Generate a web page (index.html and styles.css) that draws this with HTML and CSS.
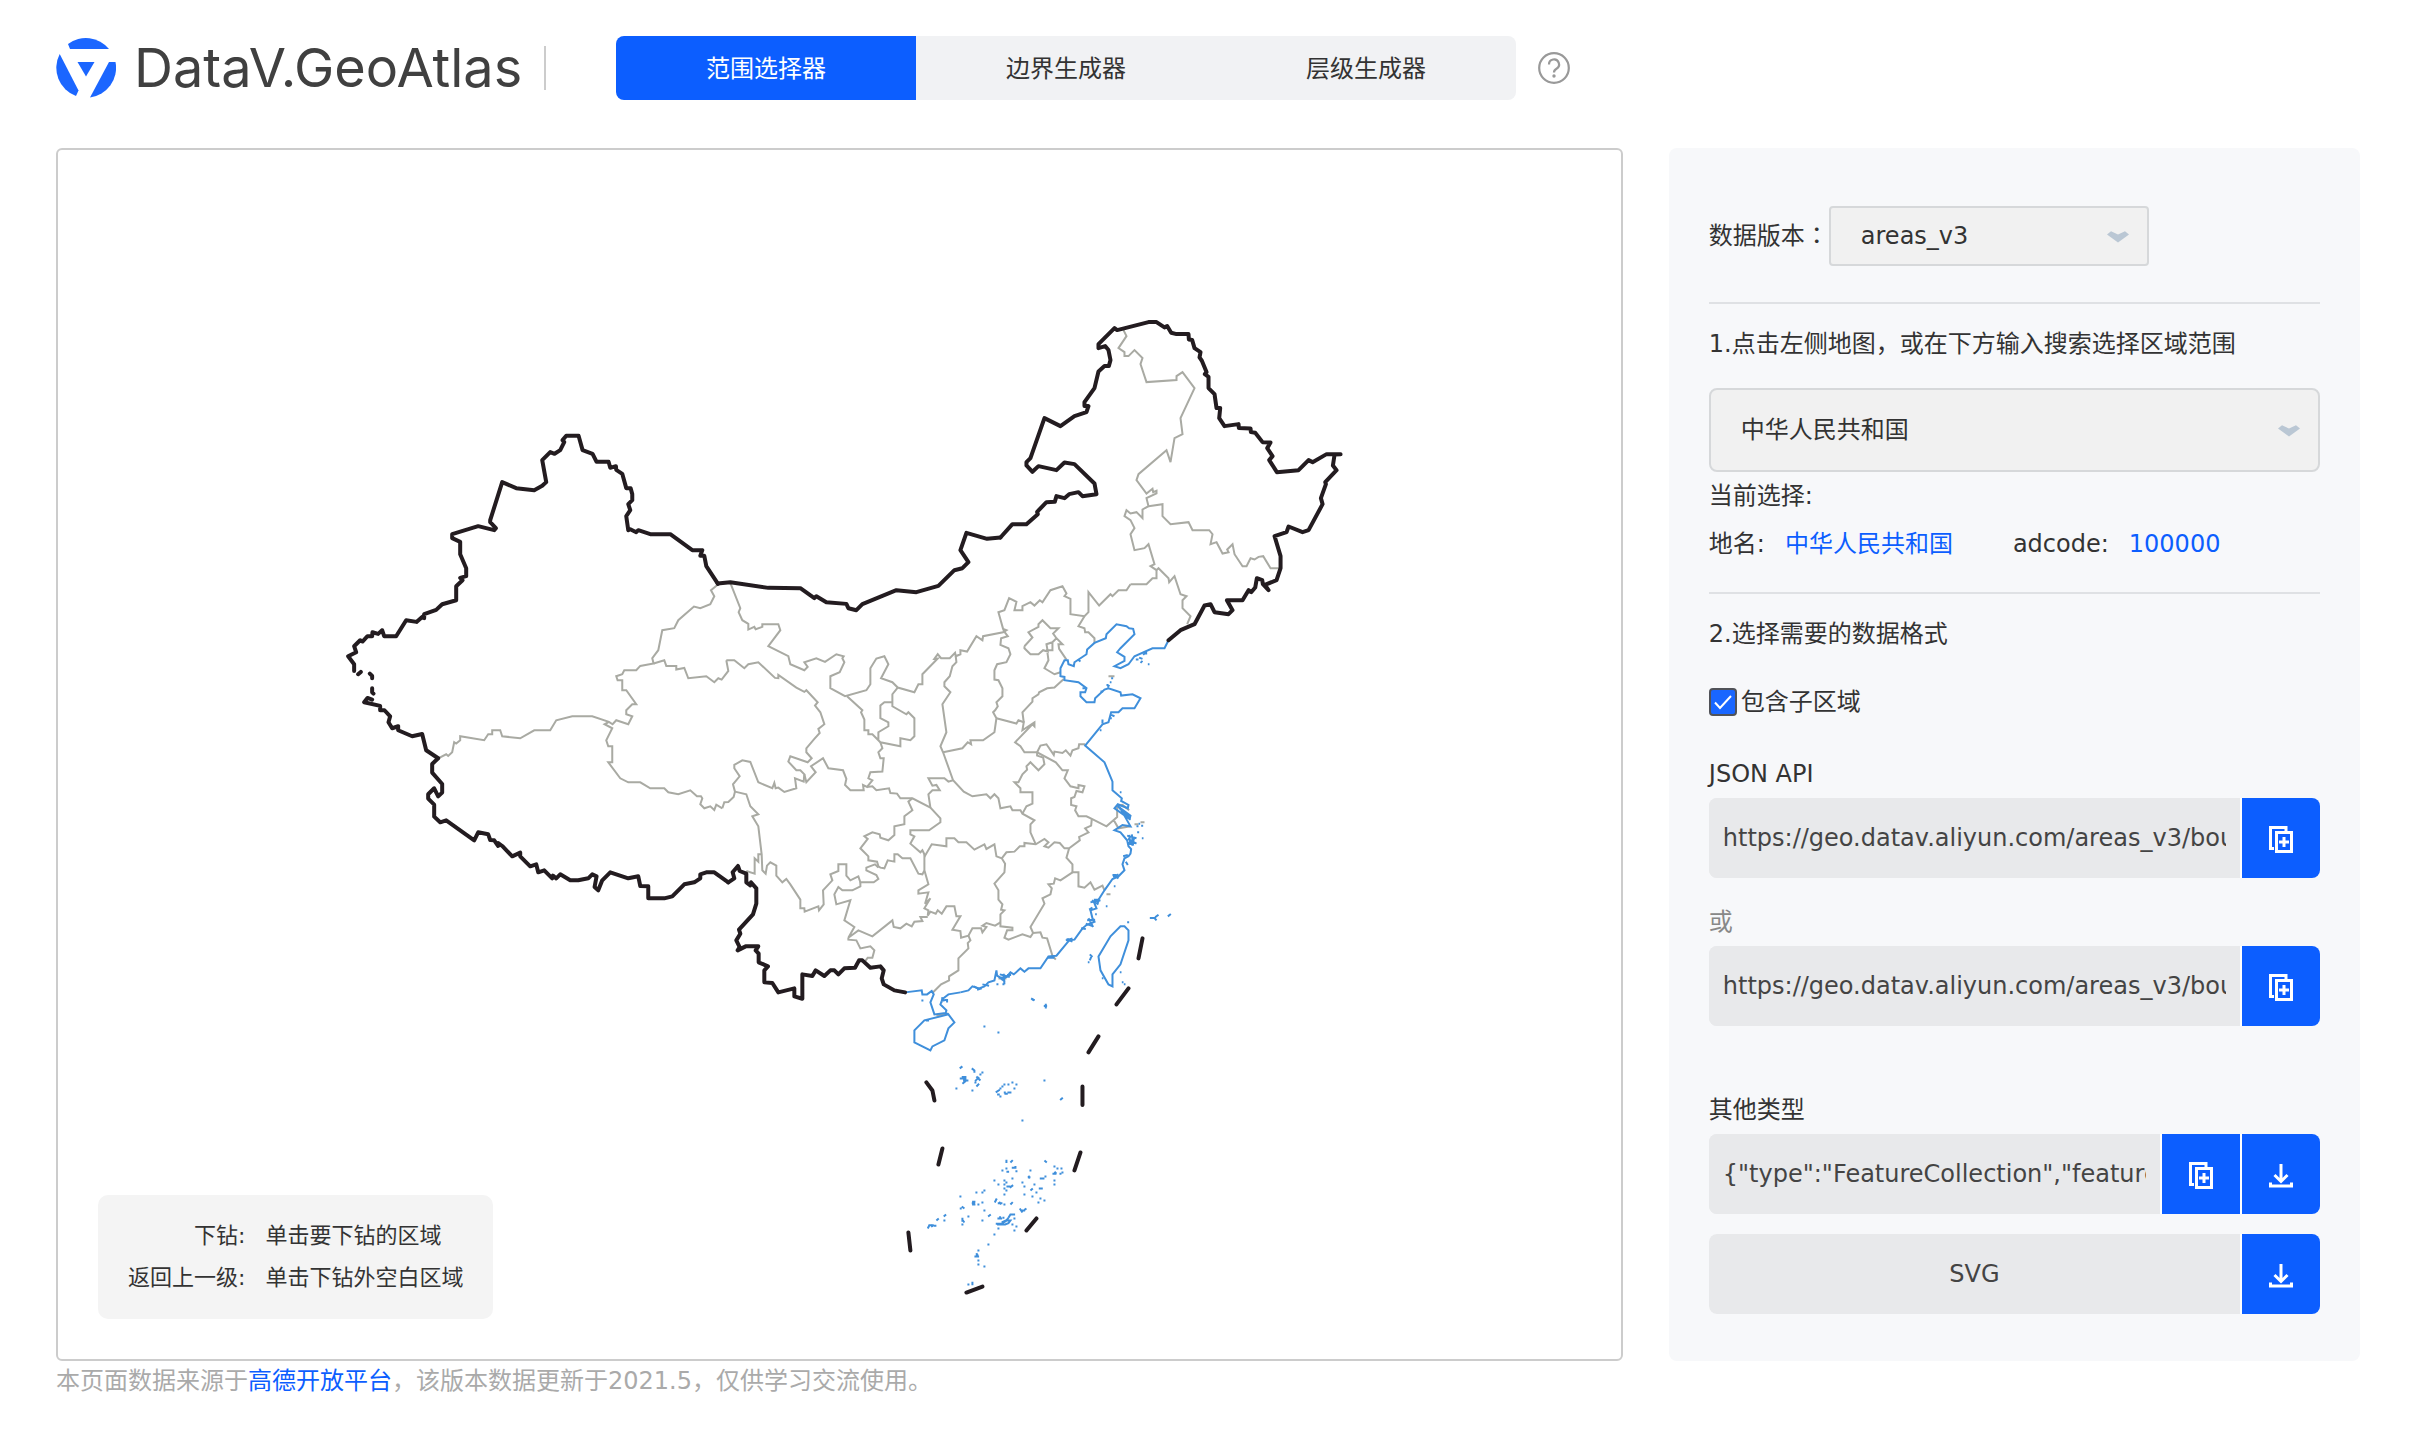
FILE: index.html
```html
<!DOCTYPE html>
<html lang="zh-CN">
<head>
<meta charset="utf-8">
<title>DataV.GeoAtlas</title>
<link rel="stylesheet" href="styles.css">
</head>
<body>
<svg class="symbols" aria-hidden="true">
  <symbol id="icon-arrow" viewBox="0 0 22 12"><path d="M0 3.5 4 .3 11 3.5 18 .3 22 3.5 11 11.500Z" fill="#bac7d4"/></symbol>
  <symbol id="icon-copy" viewBox="0 0 24 28"><path d="M5 22.500H1.500V1.500H17V5M7.500 6.500h15v19h-15ZM15 11v10M10 16h10" fill="none" stroke="#fff" stroke-width="3"/></symbol>
  <symbol id="icon-download" viewBox="0 0 24 24"><path d="M12 0v17M5.500 11 12 17.500 18.500 11M1.500 18.500V22h21v-3.500" fill="none" stroke="#fff" stroke-width="3"/></symbol>
</svg>

<header class="header">
  <a class="brand" href="#">
    <svg class="brand-mark" viewBox="0 0 60 60" aria-hidden="true">
      <g fill="#1b66ff">
        <path d="M12 6A30 30 0 0 1 53 11H14Z"/>
        <path d="M3.700 16A30 30 0 0 0 20 58L22.500 52.500Z"/>
        <path d="M53 24H59.500A30 30 0 0 1 34 59.500Z"/>
        <path d="M21.500 24H38.500L30 38.500Z"/>
      </g>
    </svg>
    <span class="brand-name">DataV.GeoAtlas</span>
  </a>
  <nav class="tabs">
    <button class="tab tab-active" type="button">范围选择器</button>
    <button class="tab" type="button">边界生成器</button>
    <button class="tab" type="button">层级生成器</button>
  </nav>
  <button class="help" type="button" aria-label="帮助">
    <svg viewBox="0 0 32 32" width="32" height="32" fill="none" stroke="#999" stroke-width="2.200"><circle cx="16" cy="16" r="14.800"/><path d="M11 12.500a5 5 0 1 1 7.500 4.200c-1.800 1-2.500 1.800-2.500 3.800"/><circle cx="16" cy="24" r="1.700" fill="#999" stroke="none"/></svg>
  </button>
</header>

<main class="main">
  <section class="map-panel" aria-label="地图">
    <svg class="map" viewBox="58 150 1562 1208" role="img" aria-label="中华人民共和国">
      <g class="province">
        <g transform="translate(330 400) scale(.33333)">
          <path d="M1163 553 1142 570 1152 588 1140 612 1110 624 1091 619 1044 660 1032 684 996 690 984 750 966 774 970 790 930 797 918 810 882 810 876 822 858 828 862 840 876 840 876 870 888 870 918 912 906 912 888 930 888 942 906 948 894 972 858 960 847 972 836 965 786 948 726 948 678 960 660 990 612 990 570 1014 516 1008 510 990 486 990 486 1002 474 1002 462 1020 390 1008 390 1020 378 1030 372 1026 366 1056 354 1067 348 1062 324 1074"/>
          <path d="M970 790 1002 780 1008 797 1038 797 1038 808 1062 803 1074 834 1128 828 1152 846 1164 834 1174 838 1194 812 1188 780"/>
          <path d="M836 965 823 972 846 984 828 1020 834 1038 846 1038 846 1086 834 1086 870 1134 894 1146 930 1146 960 1164 1002 1164 1014 1176 1044 1182 1080 1170 1100 1188 1112 1188 1116 1194 1110 1212 1122 1224 1140 1218 1152 1229 1158 1213 1176 1224"/>
        </g>
        <g transform="translate(700 550) scale(.33333)">
          <path d="M78 330 102 330 132 354 144 342 174 336 224 383 234 384 234 374 288 412 312 425 318 420 352 456 344 466 360 486 372 522 354 536 358 548 342 566 318 594 318 606 334 624 322 636 270 618 264 634 288 660 300 660 312 672 310 694 284 684 288 714 252 725 234 712 226 714 222 698 216 714 174 696 150 635 126 630 102 644 102 654 118 678 98 702 104 724 100 740 84 755 72 756 66 774"/>
          <path d="M104 724 138 732 150 768 174 792 156 798 174 828 184 912 174 912 174 934 163 924 163 970 138 962M184 912 186 960 196 970 200 946 210 936 228 946 228 976 246 996 258 986 270 1002 300 1048 300 1074 312 1074 313 1084 354 1068 356 1080 370 1062 368 1020 396 990 390 972 414 962 414 942 438 942 438 976 450 990 474 978 480 996 520 996 534 986 528 974 498 960 498 952 524 942 534 952"/>
          <path d="M90 98 120 174 115 186 126 210 144 221 144 238 162 230 166 237 186 230 186 222 234 222 240 240 204 288 264 318 270 342 312 360 322 350 312 336 348 324 374 335 408 312 430 318 426 324 432 336 418 366 390 378 390 414 434 438 498 420 510 402 510 354 528 325 552 318 564 342 542 384 576 396 592 412 642 426 654 402 666 402 666 372 712 325 702 326 712 312 722 324 748 324 764 308 766 318 780 312 780 300 800 304 828 258 846 270 848 258 908 246 918 240 908 236 894 186 912 180 926 144 948 155 942 180 966 180 966 168 990 156 1002 166 1018 150 1026 156 1050 120 1086 108 1098 130 1092 138 1110 146 1110 192 1152 198 1164 186 1164 126 1196 166 1230 132 1236 138 1254 120 1278 120 1290 102"/>
          <path d="M440 438 486 480 482 486 492 508 492 540 504 540 504 552 516 552 534 570 534 546 564 528 564 516 540 504 540 466 552 456 576 456 576 432 592 412M576 456 576 468 618 492 624 486 642 504 642 558 630 570 600 564 600 588 540 576 534 570"/>
          <path d="M540 576 546 594 534 606 540 624 550 624 546 664 510 666 504 684 516 690 500 710 488 704 490 720 450 720 434 704 438 686 428 660 384 654 368 624 332 648 346 666 318 696 312 672"/>
          <path d="M500 710 516 708 528 720 566 714 570 728 590 730 600 744 636 744 690 772 720 804 720 816 686 840 630 840 630 852 642 858 630 880 660 906 666 900 674 916 694 882 738 888 738 864 762 864 774 876 798 876 822 898 852 882 858 896 882 882 888 918 904 924 914 940 912 966 882 1000 894 1020 894 1048 906 1062 902 1078 912 1080 900 1092 900 1128 936 1132 936 1140 920 1140 912 1162 924 1168 966 1152 990 1160 998 1148 990 1130 1032 1060 1026 1044 1050 1032 1054 1014 1044 1002 1060 1000 1064 984 1080 990 1116 966"/>
          <path d="M766 318 768 336 756 348 748 378 732 396 732 408 750 426 726 462 738 546 720 588 728 606 758 690 790 724 816 738 858 732 870 744 882 732 894 744 900 774 930 768 936 780 960 780 966 790 1002 810 990 822 990 846 1006 882M690 772 684 732 696 720 718 720 708 704 696 706 684 684 732 684 744 694 758 690"/>
          <path d="M728 606 786 594 802 576 812 582 810 570 848 570 882 546 888 504 878 486 884 480 892 468 888 456 906 438 906 414 894 390 882 388 882 360 890 342 918 336 930 312 924 294 900 284 902 264 922 258 908 240"/>
          <path d="M888 504 948 520 954 510 970 516 966 540 1002 516 1002 528 996 522 944 576 960 588 972 606 1010 606 1066 636 1086 660 1102 660 1092 684 1110 708 1134 714 1134 704 1152 708 1146 726 1128 722 1122 740 1112 744 1112 764 1128 768 1124 780 1134 798 1158 798 1174 806 1218 828 1250 800 1250 768 1266 764 1286 780M1240 810 1254 834 1290 828"/>
          <path d="M970 516 966 486 996 454 996 444 1014 432 1016 426 1040 414 1062 412 1090 386M1010 606 1020 586 1038 582 1060 614 1062 604 1086 608 1096 600 1110 616 1116 600 1134 594 1136 582 1154 582M1010 606 1010 616 1028 622 1032 642 1014 660 990 636 978 648 980 658 966 672 954 696 942 696 960 714 960 726 996 726 996 760 978 768 966 790"/>
          <path d="M972 288 996 262 984 246 1014 230 1014 222 1026 210 1050 234 1074 234 1058 250 1068 264 1086 282 1074 282 1076 296 1098 328M972 288 972 294 990 312 1014 312 1028 300 1042 304 1038 282 1056 276 1056 300 1040 300 1044 330 1032 354 1062 372 1080 366M1056 276 1068 264M1152 198 1134 228 1152 234 1154 246 1164 246 1182 264 1182 280"/>
          <path d="M636 744 624 754 636 780 612 798 612 822 582 828 582 854 564 870 540 862 538 852 516 846 492 858 502 866 480 894 504 918 504 930 530 934 534 948 540 952 552 954 562 930 582 934 582 912 592 912 606 924 630 924 654 970 666 972 672 960 672 912M672 960 684 1002 654 1020 654 1030 684 1026 674 1060 690 1044 672 1074 684 1080 682 1096 690 1084 706 1090 712 1080 724 1090 738 1068 762 1068 768 1098 780 1098 756 1138 780 1142 782 1162 804 1156 816 1134 842 1134 846 1146 858 1130 846 1126 858 1118 884 1126 900 1116"/>
          <path d="M804 1156 810 1170 802 1178 804 1194 774 1224 774 1260 746 1278 746 1290 722 1302 696 1328M480 996 480 1008 456 1020 426 1020 414 1010 402 1032 408 1062 450 1050 432 1110 462 1130 444 1162 474 1140 516 1158 576 1110 580 1130 600 1134 618 1120 634 1128 642 1114 666 1112 660 1100 682 1100M444 1162 444 1168 468 1170 480 1194 510 1188 522 1200 516 1222 502 1222 492 1236"/>
          <path d="M904 924 918 906 942 904 958 888 972 888 972 878 1006 882 1032 866 1044 876 1032 888 1044 892 1062 876 1078 878 1092 894 1106 894 1138 870 1136 860 1164 846 1154 834 1172 826 1174 806M1106 894 1098 922 1116 942 1116 966 1134 966 1134 1008 1152 1012 1170 996 1182 1018 1206 1006 1212 1020M998 1148 1020 1146 1026 1162 1040 1164 1056 1216 1066 1228"/>
        </g>
        <g transform="translate(1000 300) scale(.33333)">
          <path d="M390 852 438 852 456 834 468 834 468 810M366 84 378 108 354 144 372 156 372 168 384 168 402 150 426 174 420 192 438 246 528 240 528 228 546 216 582 264 540 354 546 402 522 414 510 486 498 450 414 522 408 540 438 580 456 566 458 576 468 572 468 580 438 594 444 618 426 628 426 654 408 636 390 640 378 630 372 648 390 660 402 684 390 702 402 750 432 744 444 732 462 792 450 798 468 810 474 804 504 834 506 846 522 828 540 882 558 888 546 900 546 924 570 948 560 972"/>
          <path d="M444 618 486 612 486 648 510 672 564 666 576 690 626 690 636 702 630 732 648 726 666 760 684 756 680 748 696 732 702 762 726 798 738 798 750 774 762 778 774 770 788 768 810 804 840 804"/>
        </g>
        <path d="M1108 676h6M1134 824h4M1140 822h4M1106 894h4M998 978h8M936 1015l12-2"/>
      </g>

      <g class="coast">
        <g transform="translate(960 560) scale(.33333)">
          <path d="M624 240 612 264 576 264 522 288 504 312 480 324 462 318 492 302 492 290 470 276 480 264 522 222 518 206 506 204 498 198 468 192 438 222 436 234 402 248 380 268 378 282 342 306 340 318 324 312 322 300 312 300 300 324 300 348 312 350 312 360 354 366 378 384 374 396 360 396 360 408 378 426 402 426 404 414 432 388 444 384 480 396 482 406 516 402 540 414 522 444 486 444 474 456 452 456 444 486 426 492 374 556 432 606 456 664 456 690 484 714 482 722 504 734 502 744 472 732 462 744 510 778 472 738 510 766 508 774 478 742 510 798 486 794 462 810 480 816 500 840 504 858 512 866 510 880 504 888 492 894 486 912 492 930 474 948 456 956 432 990 414 1018 400 1024 408 1044 390 1050 396 1074 402 1084 378 1094 366 1104 342 1138 326 1140 288 1186 264 1188 240 1224 204 1224 192 1234 180 1224 160 1242 150 1236 138 1250 120 1252 110 1246 108 1230 102 1260 84 1266 72 1278 56 1284 36 1278 24 1290 0 1296"/>
          <path d="M480 1098 492 1098 504 1110 504 1140 480 1212 456 1242 456 1278 444 1272 420 1230 414 1188 450 1128Z"/>
          <path d="M500 826l28 8M502 836l26 14M506 824l4 30M514 822l4 34M522 830l-8 26M500 848l26 0M504 852l20-20M530 816h6M542 796h6M528 798h6M534 790h5M544 834h5M488 888l14-4M496 904l6 10M458 950l16-8M462 946l12 8M390 1026l30-6M394 1020l20 12M400 1018l16 0M410 1030l6-10M386 1048l10-6M380 1080l24-2M376 1090l22 8M384 1074l14 26M362 1104l14 2M318 1136l18 8M316 1140l20-6M322 1134l4 10M262 1192h20M118 1242l30 8M122 1258l24-12M116 1250l18 14M130 1240l2 32M140 1244l12 0M108 1272h6M126 1272h6M66 1272l20 4M50 1288l14-4M40 1278l16 8"/>
          <path d="M568 1073h14l6 7M584 1071l10-8M622 1068l9-7M500 1086h6M436 1038h5M404 1062h5M460 978h5M388 1182l8 8M388 1200l4-10M382 1206h5M478 1236h5M484 1266h5M490 1272h5M424 1254h5M452 464l10 4M448 474h6M418 510h5M438 374l6 0M448 366h5M452 354h6M442 382l4-8M420 394h8M526 298h8M536 292l10 4M540 308l6-6M548 284l10-10M550 280h10M562 312h5M352 298l8 6M366 384h10M426 478v12M456 944h12M478 696h5M212 1314l10 6"/>
        </g>
        <g transform="translate(700 550) scale(.33333)">
          <path d="M780 1326 744 1332 726 1346 720 1362 738 1380 736 1388 744 1392M722 1352l16-4M726 1340l-2 16M740 1346v10M614 1326 664 1320 666 1332 680 1332 694 1322 700 1332 690 1356 702 1392 736 1388M663 1350h6M994 1346l8 4M1030 1367h10M1036 1360v14"/>
        </g>
        <g transform="translate(880 1000) scale(.33333)">
          <path d="M204 42 222 66 204 84 192 120 156 138 150 150 102 126 102 90 132 60ZM136 60h10"/>
          <path d="M309 78h6M351 96h6M238 204l8-6M274 204l8 6v7M303 216h6M297 222h6M238 234h20M244 230h14M248 240h16M246 250l10-8M284 242l12-12M288 228l12 12M282 246h6M288 258l8-8M225 264h6M273 270h6M346 276l12-8M350 282h8M357 264h6M363 258h6M369 252h6M381 252h6M393 246h6M405 252h6M399 264h6M387 276h6M372 280h10M370 276h6M381 276h6M357 288h6M489 240h6M539 299l8-7M423 360h6"/>
          <path d="M378 478v10M390 486l7-7M363 510h6M375 504h6M378 514h8M394 502h14M402 500l6 0M405 512h6M492 480l7 6M519 498h6M528 504h6M540 504h6M516 520h12M522 514l6 6M537 520h6M543 516h6M519 540h6M519 552h6M447 510h6M442 530h8M444 526l4 8M478 534h14M492 528h6M423 546h6M429 558h6M459 552h6M450 570l7-6M465 576h6M475 564h12M429 582h6M453 588h6M477 594h6M471 606h6M489 600h6M339 540h6M351 552h6M369 540h6M369 552h6M375 546h6M393 534h6M378 558h12M388 562l10-8M369 564h6M375 570h6M369 582h6M309 570h6M303 576h6M285 576h6M237 588h6M274 608h10M275 604h10M275 612h10M291 612h6M303 606h6M309 630h6M343 606l6-12M352 608h14M356 604l6 8M369 612h6M390 612l7-7M418 624l8 12M424 630h10M432 628l6-4M323 648l8-6M303 660h6M261 648h6M238 624h6M244 618l8 6M246 652v12M246 658l6 8M243 672h6M190 648l7-6M189 660h6M168 660l7-6M142 684l6-12M148 674l12 0M152 672l4 8M160 676h8"/>
          <path d="M351 654h14M356 650h6M366 652h6M346 670l16 0 14-8 8-10M364 666l12-6 14 0-6 8-10 4h-24M384 652l6-10 14 0M399 654h6M393 672h6M405 678h6M399 690h6M351 684h6M339 702h6M321 732h6M291 750h6M282 768h14M288 758l4 8M286 764l8 0M291 780h6M291 792h6M309 798h6M261 852h6M276 844v10"/>
        </g>
      </g>

      <g class="nation">
        <path transform="translate(330 400) scale(.33333)" d="M1163 551 1128 498 1122 467 1110 467 1116 450 1086 450 1020 402 960 402 924 390 918 396 900 387 894 390 888 348 900 330 894 312 906 300 906 282 901 264 888 264 876 221 858 209 857 198 840 203 835 185 799 185 787 161 757 150 745 107 708 107 697 120 702 126 690 150 673 161 660 156 636 180 648 246 636 257 612 270 558 264 516 246 480 360 480 366 497 384 492 390 444 378 366 402 366 414 390 425 390 462 408 504 408 528 390 533 397 540 378 558 378 600 336 612 318 629 282 642 282 654 276 650 259 665 228 660 198 708 162 708 156 690 144 701 127 696 126 708 112 708 97 724 90 720 72 738 78 756 54 768 72 792 72 812M84 822 92 815M119 820 126 827 126 834M126 864 126 876 130 880M126 898 112 893 102 906 150 917 150 930 163 930 180 948 175 966 186 984 204 978 204 990 246 1008 276 1001 288 1050 324 1074 306 1091 306 1117 336 1151 336 1177 324 1188 312 1164 294 1182 294 1195 312 1213 312 1249 330 1266 348 1260 432 1320 444 1296 474 1302 480 1319 492 1320 504 1337 504 1328 516 1337 546 1368 570 1357 570 1368 600 1398 618 1392 624 1416 642 1410 666 1434 668 1426 678 1434 690 1422 720 1440 744 1440 774 1434 786 1422 799 1428 793 1460 804 1470 816 1440 840 1416 894 1434 924 1428 930 1457 954 1458 954 1494 1002 1494 1026 1488 1062 1452 1092 1446 1110 1434 1110 1422 1128 1416 1152 1416 1194 1446"/>
        <path transform="translate(700 550) scale(.33333)" d="M52 100 90 96 204 113 300 114 342 144 348 138 378 156 438 161 444 174 468 180 486 162 588 120 648 126 714 107 762 60 786 54 804 36 780 0 798-52 860-34 900-38M84 996 102 984 97 966 113 947 118 962 138 970 138 996 150 1005 152 996 168 1014 168 1060 158 1092 116 1138 120 1150 108 1170 118 1190 112 1200 136 1188 174 1188 166 1200 175 1210 175 1236 203 1248 192 1260 192 1296 216 1298 234 1326 282 1314 282 1338 306 1345 306 1272 336 1277 346 1260 372 1277 390 1260 402 1260 414 1272 432 1254 464 1252 476 1230 486 1230 510 1252 540 1248 550 1260 544 1284 550 1302 582 1320 614 1326M1284 1314 1248 1362"/>
        <path transform="translate(1000 300) scale(.33333)" d="M0 712 36 672 78 672 112 642 110 635 138 606 163 605 168 588 192 594 206 582 234 576 246 588 288 582 282 550 222 492 192 487 168 510 114 498 96 515 78 496 78 486 90 474 132 354 180 378 222 348 258 336 264 318 252 318 252 306 282 264 294 214 312 198 325 198 330 180 324 150 314 138 294 144 294 132 342 84 350 90 444 66 468 66 492 82 500 78 512 98 528 102 564 102 565 118 575 120 582 144 600 156 597 172 604 182 618 216 613 222 624 230 624 264 642 282 648 324 659 324 656 354 672 378 714 372 715 384 750 385 751 396 764 398 786 426 810 427 800 444 816 468 806 480 829 516 894 510 924 480 936 486 978 462 1020 462 1002 463 997 496 1008 510 974 546 976 552 961 594 966 612 924 690 906 696 864 679 858 696 822 708 840 768 840 804 828 840 793 854 804 870 787 852 785 840 769 834 764 862 752 876 744 870 726 900 679 900 696 930 684 942 642 936 630 912 612 916 582 972 540 990 504 1020"/>
        <path transform="translate(880 1000) scale(.33333)" d="M654 108 624 156M606 258 606 314M600 456 582 510M468 654 438 690M306 858 258 876M84 696 90 750M186 444 174 492M138 246 156 270 162 300M786-186 774-126"/>
      </g>
    </svg>
    <dl class="legend">
      <dt>下钻:</dt><dd>单击要下钻的区域</dd>
      <dt>返回上一级:</dt><dd>单击下钻外空白区域</dd>
    </dl>
  </section>

  <aside class="sidebar">
    <div class="version">
      <label for="version">数据版本<span class="punct" lang="ko">：</span></label>
      <div class="select version-select">
        <select id="version"><option>areas_v3</option></select>
        <svg class="arrow"><use href="#icon-arrow"/></svg>
      </div>
    </div>

    <section class="step">
      <label class="line region-title" for="region">1.点击左侧地图<span class="punct" lang="ko">，</span>或在下方输入搜索选择区域范围</label>
      <div class="select region-select">
        <select id="region"><option>中华人民共和国</option></select>
        <svg class="arrow"><use href="#icon-arrow"/></svg>
      </div>
      <p class="line">当前选择:</p>
      <p class="line current"><span>地名:</span><span class="value">中华人民共和国</span><span class="code-label">adcode:</span><span class="value">100000</span></p>
    </section>

    <section class="step">
      <h2 class="line">2.选择需要的数据格式</h2>
      <label class="line check">
        <span class="check-box"><input type="checkbox" checked><svg viewBox="0 0 28 28"><path d="M6 14.500 11 20 22 8" fill="none" stroke="#fff" stroke-width="2"/></svg></span>
        包含子区域
      </label>

      <label class="line api-label" for="api">JSON API</label>
      <div class="field">
        <input id="api" type="text" readonly value="https://geo.datav.aliyun.com/areas_v3/bound/100000_full.json">
        <button type="button" aria-label="复制"><svg class="icon-copy"><use href="#icon-copy"/></svg></button>
      </div>

      <label class="line or-label" for="api-alt">或</label>
      <div class="field">
        <input id="api-alt" type="text" readonly value="https://geo.datav.aliyun.com/areas_v3/bound/geojson?code=100000_full">
        <button type="button" aria-label="复制"><svg class="icon-copy"><use href="#icon-copy"/></svg></button>
      </div>

      <label class="line other-label" for="geojson">其他类型</label>
      <div class="field">
        <input id="geojson" type="text" readonly value='{"type":"FeatureCollection","features":[]}'>
        <button type="button" aria-label="复制"><svg class="icon-copy"><use href="#icon-copy"/></svg></button>
        <button type="button" aria-label="下载"><svg class="icon-download"><use href="#icon-download"/></svg></button>
      </div>
      <div class="field svg-field">
        <span class="field-name">SVG</span>
        <button type="button" aria-label="下载 SVG"><svg class="icon-download"><use href="#icon-download"/></svg></button>
      </div>
    </section>
  </aside>
</main>

<footer class="footer">本页面数据来源于<a href="#">高德开放平台</a><span class="punct" lang="ko">，</span>该版本数据更新于2021.5<span class="punct" lang="ko">，</span>仅供学习交流使用。</footer>
</body>
</html>
```
FILE: styles.css
```css
* { box-sizing: border-box; }

body {
  margin: 0;
  padding: 0 60px 0 56px;
  background: #fff;
  color: #333;
  font: 24px/48px "DejaVu Sans", "Noto Sans CJK SC", sans-serif;
}

h2, p, dl, dd { margin: 0; font-size: inherit; font-weight: 400; }
button, input, select { font: inherit; color: inherit; border: 0; padding: 0; margin: 0; }
button { cursor: pointer; }
a { color: #0c5eff; text-decoration: none; }
svg { display: block; }
.symbols { display: none; }

/* Full-width marks in the form that sits in the middle of its square */
.punct { font-family: "DejaVu Sans", "Noto Sans CJK KR", sans-serif; }

/* Header */
.header { display: flex; align-items: center; padding: 36px 0 48px; }
.brand { display: flex; align-items: center; width: 490px; height: 44px; gap: 18px; border-right: 2px solid #ccc; color: #404040; }
.brand-mark { flex: none; width: 60px; height: 60px; }
.brand-name { font: 400 54px/60px Inter, sans-serif; }
.tabs { display: flex; width: 900px; margin-left: 70px; border-radius: 8px; overflow: hidden; }
.tab { flex: 1; height: 64px; padding-top: 2px; background: #f1f2f4; }
.tab-active { background: #0c5eff; color: #fff; }
.help { margin-left: 22px; background: none; }

/* Layout */
.main { display: flex; justify-content: space-between; }
.map-panel { position: relative; display: flex; align-items: center; width: 68%; border: 2px solid #ccc; border-radius: 6px; }
.map { width: 100%; }
.sidebar { width: 30%; padding: 58px 40px 47px; border-radius: 8px; background: #f7f8fa; }

/* Map */
.map path { fill: none; }
.province { stroke: #a9aaa3; stroke-width: 2px; }
.province g, .coast g { stroke-width: 6px; }
.coast { stroke: #3f8fdb; }
.nation { stroke: #231c20; stroke-width: 12px; stroke-linecap: round; stroke-linejoin: round; }

.legend {
  position: absolute; left: 40px; bottom: 40px;
  display: grid; grid-template-columns: auto auto; column-gap: 20px;
  padding: 20px 30px; border-radius: 10px; background: #f4f4f4;
  font-size: 22px; line-height: 42px;
}
.legend dt { text-align: right; }

/* Sidebar */
.line { display: block; }
.version { display: flex; align-items: center; padding-bottom: 36px; white-space: nowrap; }
.select { position: relative; }
.select select {
  display: block; width: 100%; height: 100%; padding: 0 30px;
  appearance: none; border: 2px solid #d6d8da; border-radius: 8px; background: #f1f1f1;
}
.version-select { width: 320px; height: 60px; }
.version-select select { border-radius: 4px; }
.region-select { height: 84px; }
.region-title { margin-bottom: 20px; }
.arrow { position: absolute; right: 20px; top: 50%; width: 22px; height: 12px; margin-top: -5px; pointer-events: none; }

.step { border-top: 2px solid #dfe1e4; padding: 16px 0 24px; }
.step:last-child { padding-bottom: 0; }
.current { display: flex; gap: 20px; }
.value { color: #0c5eff; }
.code-label { margin-left: 40px; }

.check { display: flex; align-items: center; gap: 4px; margin-top: 20px; }
.check-box { position: relative; width: 28px; height: 28px; }
.check-box input { display: block; width: 28px; height: 28px; appearance: none; border: 2px solid #505258; border-radius: 4px; background: #1966ff; }
.check-box svg { position: absolute; inset: 0; pointer-events: none; }

.api-label { margin-top: 24px; }
.or-label { margin-top: 20px; color: #888; }
.other-label { margin-top: 60px; }
.svg-field { margin-top: 20px; }

.field { display: flex; gap: 2px; height: 80px; border-radius: 8px; overflow: hidden; background: #fff; color: #444; }
.field input, .field-name { flex: 1; min-width: 0; background: #e8e9eb; }
.field input { border: solid #e8e9eb; border-width: 0 14px; outline: 0; }
.field-name { line-height: 80px; text-align: center; }
.field button { display: grid; place-items: center; width: 78px; padding-top: 4px; background: #0c5eff; }
.icon-copy { width: 24px; height: 28px; }
.icon-download { width: 24px; height: 24px; }

.footer { line-height: 40px; color: #aaa; }
```
